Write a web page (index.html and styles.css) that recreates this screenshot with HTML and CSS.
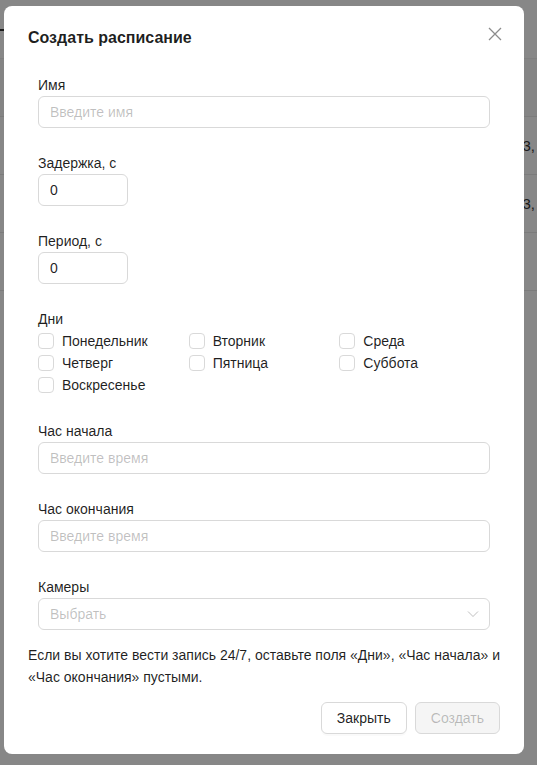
FILE: index.html
```html
<!DOCTYPE html>
<html lang="ru">
<head>
<meta charset="utf-8">
<title>Создать расписание</title>
<link rel="stylesheet" href="styles.css">
</head>
<body>
<div class="page">
  <div class="toolbar"><span class="plus" aria-hidden="true"></span></div>
  <div class="table">
    <div class="row head"><span></span></div>
    <div class="row"><span>23,</span></div>
    <div class="row"><span>23,</span></div>
    <div class="row"><span></span></div>
  </div>
</div>

<div class="overlay">
  <div class="modal">
    <div class="modal-header">
      <div class="modal-title">Создать расписание</div>
      <button class="close" aria-label="Закрыть">
        <svg width="14" height="14" viewBox="0 0 14 14"><path d="M1 1 L13 13 M13 1 L1 13" stroke="currentColor" stroke-width="1.3" fill="none"/></svg>
      </button>
    </div>
    <form class="form">
      <div class="item">
        <label class="label">Имя</label>
        <div class="input placeholder">Введите имя</div>
      </div>
      <div class="item">
        <label class="label">Задержка, с</label>
        <div class="input short">0</div>
      </div>
      <div class="item">
        <label class="label">Период, с</label>
        <div class="input short">0</div>
      </div>
      <div class="item">
        <label class="label">Дни</label>
        <div class="days">
          <label class="check"><span class="box"></span>Понедельник</label>
          <label class="check"><span class="box"></span>Вторник</label>
          <label class="check"><span class="box"></span>Среда</label>
          <label class="check"><span class="box"></span>Четверг</label>
          <label class="check"><span class="box"></span>Пятница</label>
          <label class="check"><span class="box"></span>Суббота</label>
          <label class="check"><span class="box"></span>Воскресенье</label>
        </div>
      </div>
      <div class="item">
        <label class="label">Час начала</label>
        <div class="input placeholder">Введите время</div>
      </div>
      <div class="item">
        <label class="label">Час окончания</label>
        <div class="input placeholder">Введите время</div>
      </div>
      <div class="item last">
        <label class="label">Камеры</label>
        <div class="input placeholder select">
          <span>Выбрать</span>
          <svg class="chev" width="12" height="12" viewBox="0 0 12 12"><path d="M1 3.5 L6 8.5 L11 3.5" stroke="currentColor" stroke-width="1" fill="none"/></svg>
        </div>
      </div>
    </form>
    <p class="note">Если вы хотите вести запись 24/7, оставьте поля «Дни», «Час начала» и «Час окончания» пустыми.</p>
    <div class="footer">
      <button class="btn">Закрыть</button>
      <button class="btn disabled">Создать</button>
    </div>
  </div>
</div>
</body>
</html>
```

FILE: styles.css
```css
* { box-sizing: border-box; }
html, body { margin: 0; padding: 0; }
body {
  font-family: "Liberation Sans", Arial, sans-serif;
  font-size: 14px;
  line-height: 22px;
  color: rgba(0,0,0,0.88);
  background: #fff;
  width: 537px;
  height: 765px;
  overflow: hidden;
}
.page { padding: 0; }
.toolbar { height: 58px; padding-top: 24px; }
.plus {
  display: block;
  position: relative;
  width: 12px;
  height: 12px;
  margin-left: -7px;
}
.plus::before, .plus::after {
  content: "";
  position: absolute;
  background: #333;
}
.plus::before { left: 0; right: 0; top: 5px; height: 2px; }
.plus::after { top: 0; bottom: 0; left: 5px; width: 2px; }
.table { border-top: 1px solid #f0f0f0; }
.row {
  height: 58px;
  border-bottom: 1px solid #e8e8e8;
  display: flex;
  align-items: center;
  justify-content: flex-end;
  padding-right: 2px;
  font-size: 15px;
  color: #333;
}
.row.head { background: #fafafa; }

.overlay {
  position: fixed;
  inset: 0;
  background: rgba(0,0,0,0.47);
  padding: 6px 0 0 4px;
}
.modal {
  width: 520px;
  height: 748px;
  background: #fff;
  border-radius: 8px;
  padding: 20px 24px;
  position: relative;
}
.modal-header { height: 24px; margin-bottom: 24px; }
.modal-title {
  font-size: 16px;
  font-weight: bold;
  line-height: 24px;
  color: rgba(0,0,0,0.88);
}
.close {
  position: absolute;
  top: 21px;
  right: 22px;
  width: 14px;
  height: 14px;
  padding: 0;
  border: 0;
  background: none;
  color: rgba(0,0,0,0.45);
  display: flex;
}
.form { padding: 0 10px; }
.item { display: flex; flex-direction: column; margin-bottom: 24px; }
.item.last { margin-bottom: 14px; }
.label { height: 22px; }
.input {
  height: 32px;
  border: 1px solid #d9d9d9;
  border-radius: 6px;
  padding: 4px 11px;
  color: rgba(0,0,0,0.88);
}
.input.short { width: 90px; }
.placeholder { color: rgba(0,0,0,0.25); }
.select { display: flex; align-items: center; justify-content: space-between; }
.chev { color: rgba(0,0,0,0.25); margin-right: -1px; }
.days { display: grid; grid-template-columns: repeat(3, 1fr); }
.check { display: flex; align-items: center; height: 22px; }
.box {
  width: 16px;
  height: 16px;
  border: 1px solid #d9d9d9;
  border-radius: 4px;
  margin-right: 8px;
}
.note { margin: 0 0 14px; }
.footer { display: flex; justify-content: flex-end; gap: 8px; }
.btn {
  height: 32px;
  padding: 4px 15px;
  border: 1px solid #d9d9d9;
  border-radius: 6px;
  background: #fff;
  font: inherit;
  color: rgba(0,0,0,0.88);
  box-shadow: 0 2px 0 rgba(0,0,0,0.02);
}
.btn.disabled {
  background: rgba(0,0,0,0.04);
  color: rgba(0,0,0,0.25);
  box-shadow: none;
}
```
